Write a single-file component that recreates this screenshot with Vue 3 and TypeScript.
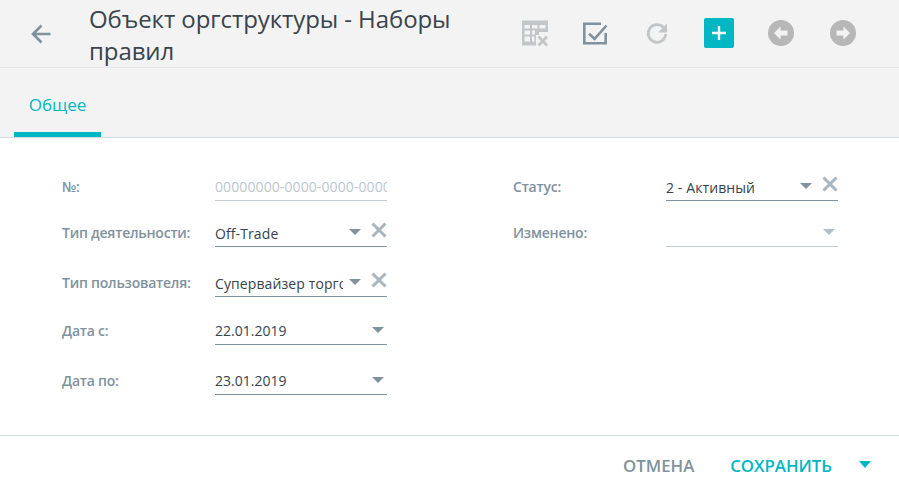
<script setup lang="ts">
interface Field {
  label: string
  value?: string
  placeholder?: string
  arrow?: boolean
  clear?: boolean
  disabled?: boolean
  date?: boolean
  h: number
}
const left: Field[] = [
  { label: '№:', placeholder: '00000000-0000-0000-0000-000000000000', h: 46 },
  { label: 'Тип деятельности:', value: 'Off-Trade', arrow: true, clear: true, h: 50 },
  { label: 'Тип пользователя:', value: 'Супервайзер торговый', arrow: true, clear: true, h: 48 },
  { label: 'Дата с:', value: '22.01.2019', arrow: true, date: true, h: 50 },
  { label: 'Дата по:', value: '23.01.2019', arrow: true, date: true, h: 50 },
]
const right: Field[] = [
  { label: 'Статус:', value: '2 - Активный', arrow: true, clear: true, h: 46 },
  { label: 'Изменено:', arrow: true, disabled: true, h: 50 },
]
const columns = [left, right]
</script>

<template>
  <div class="page">
    <header class="top">
      <button class="back" aria-label="Назад">
        <svg width="24" height="24" viewBox="0 0 24 24"><path d="M21.5 12H4.5M12.5 3.5 4 12l8.500 8.500" fill="none" stroke="#7f929e" stroke-width="2.600"/></svg>
      </button>
      <h1 class="title">Объект оргструктуры - Наборы правил</h1>
      <div class="tools">
        <svg class="tool first" width="28" height="28" viewBox="0 0 28 28">
          <path d="M1 1.500h26v11.500h-9v3h-3v10.500H1zM3.500 6v3.500h5.500V6zM11 6v3.500h5.500V6zM18.500 6v3.500h6V6zM3.500 11.500V15.500h5.500v-4zM11 11.500V15.500h3v-4zM3.500 17.500V22.500h5.500v-5zM11 17.500V22.500h2.500v-5z" fill="#c3c5c6" fill-rule="evenodd"/>
          <path d="M17.500 17.500 26 26.500M26 17.500l-8.500 9" stroke="#c3c5c6" stroke-width="2.800" fill="none"/>
        </svg>
        <svg class="tool" width="28" height="28" viewBox="0 0 28 28">
          <path d="M20 4.800H3.300V24.200H24.700V14" fill="none" stroke="#7f929e" stroke-width="2.600"/>
          <path d="M8 14.800 13.600 19.800 25.500 6.500" fill="none" stroke="#7f929e" stroke-width="2.600"/>
        </svg>
        <svg class="tool" width="28" height="28" viewBox="0 0 28 28">
          <path d="M20.500 8.500A8.800 8.800 0 1 0 22.800 15" fill="none" stroke="#c3c5c6" stroke-width="2.800"/>
          <path d="M24 4.500v9h-9z" fill="#c3c5c6"/>
        </svg>
        <span class="add">
          <svg width="14" height="14" viewBox="0 0 14 14"><path d="M7 0v14M0 7h14" stroke="#fff" stroke-width="2.400"/></svg>
        </span>
        <svg class="tool" width="28" height="28" viewBox="0 0 28 28">
          <circle cx="14" cy="14" r="13" fill="#b7b7b7"/>
          <path d="M13.500 7.500 7 14l6.500 6.500V16.500H20.500v-5H13.500z" fill="#f3f3f3"/>
        </svg>
        <svg class="tool" width="28" height="28" viewBox="0 0 28 28">
          <circle cx="14" cy="14" r="13" fill="#b7b7b7"/>
          <path d="M14.500 7.500 21 14l-6.500 6.500V16.500H7.500v-5H14.500z" fill="#f3f3f3"/>
        </svg>
      </div>
    </header>

    <nav class="tabs">
      <span class="tab">Общее</span>
    </nav>

    <main class="form">
      <section v-for="(col, c) in columns" :key="c" class="col">
        <div v-for="f in col" :key="f.label" class="row" :style="{ height: f.h + 'px' }">
          <label class="label">{{ f.label }}</label>
          <div class="field" :class="{ muted: f.disabled || f.placeholder }">
            <span class="value" :class="{ ph: f.placeholder, short: f.clear, date: f.date }">{{ f.value ?? f.placeholder }}</span>
            <svg v-if="f.arrow" class="arrow" :class="{ shift: f.clear }" width="12" height="6" viewBox="0 0 12 6"><path d="M0 0h12L6 6z" :fill="f.disabled ? '#b4c0c8' : '#7f929e'"/></svg>
            <svg v-if="f.clear" class="clear" width="16" height="16" viewBox="0 0 16 16"><path d="M1.500 1.500l13 13M14.500 1.500l-13 13" stroke="#aab6be" stroke-width="3"/></svg>
          </div>
        </div>
      </section>
    </main>

    <footer class="foot">
      <button class="btn cancel">ОТМЕНА</button>
      <button class="btn save">СОХРАНИТЬ</button>
      <svg class="more" width="12" height="7" viewBox="0 0 12 7"><path d="M0 0h12L6 7z" fill="#00b7c3"/></svg>
    </footer>
  </div>
</template>

<style>
html, body { margin: 0; background: #fff; }
</style>

<style scoped>
.page {
  width: 899px;
  height: 493px;
  overflow: hidden;
  font-family: "Open Sans", "Noto Sans", sans-serif;
  color: #37424a;
  background: #fff;
}
.top {
  height: 67px;
  box-sizing: content-box;
  border-bottom: 1px solid #e4e6e7;
  background: #f3f3f3;
  display: flex;
  align-items: center;
}
.back {
  width: 28px;
  height: 28px;
  margin-left: 27px;
  padding: 2px;
  border: 0;
  background: none;
  flex: none;
}
.title {
  width: 400px;
  margin: 0 0 0 34px;
  font-size: 24px;
  font-weight: 400;
  line-height: 32px;
  letter-spacing: -0.08px;
  color: #3a444c;
  transform: translateY(1px);
}
.tools {
  display: flex;
  align-items: center;
  margin-left: 32px;
  padding-bottom: 2px;
  gap: 34px;
}
.tool { flex: none; }
.tool.first { margin-right: -2px; }
.add {
  width: 30px;
  height: 30px;
  margin: 0 -1px;
  border-radius: 2px;
  background: #00b7c3;
  display: flex;
  align-items: center;
  justify-content: center;
}
.tabs {
  height: 69px;
  border-bottom: 1px solid #d3dbdf;
  background: #f3f3f3;
  padding-left: 14px;
  display: flex;
}
.tab {
  width: 87px;
  height: 69px;
  box-sizing: border-box;
  border-bottom: 5px solid #00b7c3;
  text-align: center;
  font-size: 17px;
  line-height: 74px;
  color: #00b7c3;
}
.form {
  height: 298px;
  box-sizing: border-box;
  border-bottom: 1px solid #d3dbdf;
  padding: 28px 0 0 62px;
  display: flex;
}
.col { width: 451px; flex: none; }
.row { display: flex; align-items: flex-start; }
.label {
  width: 153px;
  flex: none;
  font-size: 14px;
  font-weight: 600;
  line-height: 20px;
  letter-spacing: -0.22px;
  color: #7f929e;
  padding-top: 11px;
}
.field {
  position: relative;
  width: 172px;
  height: 35px;
  box-sizing: border-box;
  border-bottom: 1px solid #7f929e;
}
.field.muted { border-bottom-color: #c2ccd2; }
.value {
  display: block;
  height: 20px;
  overflow: hidden;
  white-space: nowrap;
  font-size: 14px;
  line-height: 20px;
  letter-spacing: 0.1px;
  margin-top: 12px;
  color: #37424a;
}
.value.date { margin-top: 11px; letter-spacing: 0; }
.value.short { width: 128px; }
.value.ph { color: #bdc7cd; margin-top: 11px; }
.arrow { position: absolute; right: 3px; top: 17px; }
.arrow.shift { right: 26px; }
.clear { position: absolute; right: 0; top: 10px; }
.foot {
  height: 58px;
  box-sizing: border-box;
  padding: 2px 0 0 623px;
  display: flex;
  align-items: center;
}
.btn {
  border: 0;
  padding: 0;
  background: none;
  font-family: inherit;
  font-size: 16.8px;
  font-weight: 600;
  line-height: 22px;
}
.cancel { color: #7f929e; margin-right: 36px; }
.save { color: #00b7c3; margin-right: 27px; }
.more { margin-top: -4px; }
</style>
